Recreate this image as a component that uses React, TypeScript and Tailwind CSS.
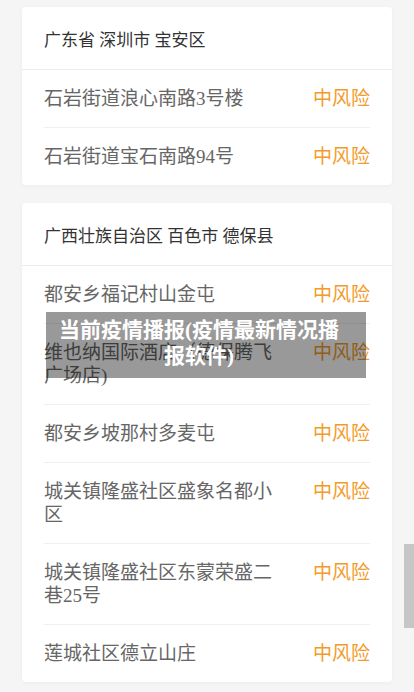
import React from 'react';

type Item = { name: string; level: string };

const groups: { title: string; items: Item[] }[] = [
  {
    title: '广东省 深圳市 宝安区',
    items: [
      { name: '石岩街道浪心南路3号楼', level: '中风险' },
      { name: '石岩街道宝石南路94号', level: '中风险' },
    ],
  },
  {
    title: '广西壮族自治区 百色市 德保县',
    items: [
      { name: '都安乡福记村山金屯', level: '中风险' },
      { name: '维也纳国际酒店（德保腾飞广场店)', level: '中风险' },
      { name: '都安乡坡那村多麦屯', level: '中风险' },
      { name: '城关镇隆盛社区盛象名都小区', level: '中风险' },
      { name: '城关镇隆盛社区东蒙荣盛二巷25号', level: '中风险' },
      { name: '莲城社区德立山庄', level: '中风险' },
    ],
  },
];

const font = { fontFamily: '"Liberation Serif", "Noto Sans CJK SC", serif' };

function RiskCard({ title, items }: { title: string; items: Item[] }) {
  return (
    <div className="bg-white rounded-[4px] shadow-[0_1px_4px_rgba(0,0,0,0.04)]">
      <div className="h-[63px] pl-[22px] pt-[22px] border-b border-[#ececec] text-[17px] leading-[23px] text-[#333]">
        {title}
      </div>
      <div className="px-[22px]">
        {items.map((it, i) => (
          <div key={i} className="flex justify-between items-start py-[17px] border-b border-[#efefef] last:border-b-0">
            <div className="w-[235px] text-[19px] leading-[23px] text-[#666]">{it.name}</div>
            <div className="text-[19px] leading-[23px] text-[#f39b2a]">{it.level}</div>
          </div>
        ))}
      </div>
    </div>
  );
}

export default function App() {
  return (
    <div className="relative h-[692px] overflow-hidden bg-[#f5f5f5]" style={font}>
      <div className="flex flex-col gap-[18px] px-[22px] pt-[7px]">
        {groups.map((g, i) => (
          <RiskCard key={i} title={g.title} items={g.items} />
        ))}
      </div>

      {/* 标题遮罩 */}
      <div className="absolute left-[46px] top-[312px] w-[320px] h-[66px] bg-black/40 pl-[10px] pr-[24px] pt-[5px] text-center text-white font-bold text-[21px] leading-[26px]">
        当前疫情播报(疫情最新情况播报软件)
      </div>

      {/* 右侧滚动块 */}
      <div className="absolute right-0 top-[544px] w-[10px] h-[84px] bg-[#c6c6c6]" />
    </div>
  );
}
